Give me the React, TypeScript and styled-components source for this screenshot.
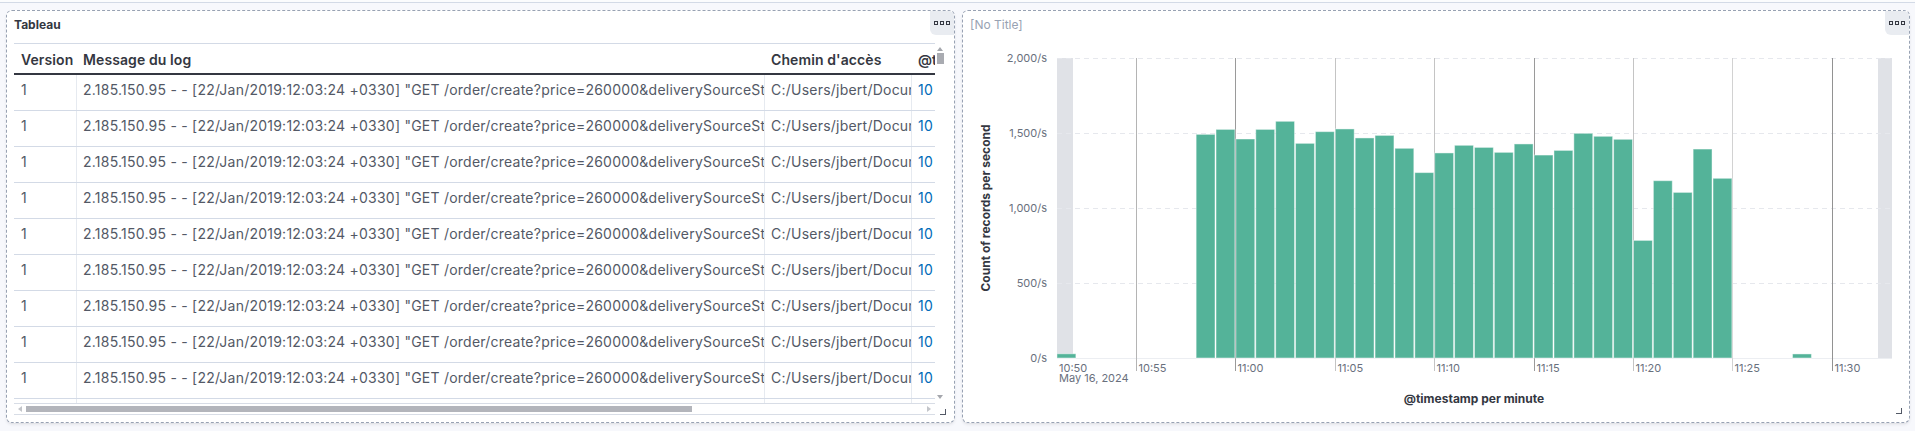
import React from "react";
import styled, { createGlobalStyle } from "styled-components";

const GlobalStyle = createGlobalStyle`
  html, body { margin: 0; padding: 0; }
  body {
    background: #f7f8fc;
    font-family: Inter, "Noto Sans", sans-serif;
    width: 1915px;
    height: 431px;
    overflow: hidden;
  }
  * { box-sizing: border-box; }
`;

const Page = styled.div`
  width: 1915px;
  height: 431px;
`;

const TopRule = styled.div`
  height: 3px;
  background: #fbfcfd;
  border-bottom: 1px solid #d3dae6;
`;

const PanelGrid = styled.div`
  display: grid;
  grid-template-columns: 949px 948px;
  column-gap: 7px;
  padding: 7px 0 0 6px;
`;

const Panel = styled.section`
  position: relative;
  height: 413px;
  background: #fff;
  border: 1px dashed #98a2b3;
  border-radius: 6px;
  box-shadow: 0 2px 3px rgba(60, 66, 80, 0.08), 0 1px 1px rgba(60, 66, 80, 0.05);
  display: flex;
  flex-direction: column;
`;

const PanelHeader = styled.header`
  height: 32px;
  flex: none;
  padding: 6px 7px 0;
`;

const PanelTitle = styled.h2<{ $muted?: boolean }>`
  margin: 0;
  font-size: 12px;
  line-height: 16px;
  font-weight: ${(p) => (p.$muted ? 400 : 700)};
  color: ${(p) => (p.$muted ? "#98a2b3" : "#343741")};
`;

const MenuButton = styled.button`
  position: absolute;
  top: 0;
  right: 0;
  width: 24px;
  height: 24px;
  padding: 0;
  border: none;
  background: #e9ecf1;
  border-radius: 0 5px 0 6px;
  display: flex;
  align-items: center;
  justify-content: center;
  gap: 2px;
`;

const MenuDot = styled.span`
  width: 4px;
  height: 4px;
  border: 1.2px solid #343741;
`;

const ResizeHandle = styled.span<{ $right: number; $bottom: number }>`
  position: absolute;
  right: ${(p) => p.$right}px;
  bottom: ${(p) => p.$bottom}px;
  width: 6px;
  height: 6px;
  border-right: 1.5px solid #535966;
  border-bottom: 1.5px solid #535966;
`;

/* ---------- Table ---------- */

const TableFrame = styled.div`
  margin: 0 9px 0 7px;
  height: 372px;
  display: grid;
  grid-template-columns: 921px 10px;
  grid-template-rows: 360px 12px;
`;

const Viewport = styled.div`
  overflow: hidden;
  border-top: 1px solid #d3dae6;
`;

const COLS = "62px 688px 147px 220px";

const HeadRow = styled.div`
  display: grid;
  grid-template-columns: ${COLS};
  width: max-content;
  height: 31px;
  border-bottom: 2px solid #343741;
`;

const HeadCell = styled.div`
  padding: 6px 10px 0 6px;
  border-left: 1px solid transparent;
  font-size: 14px;
  line-height: 20px;
  font-weight: 600;
  letter-spacing: 0.1px;
  color: #343741;
  white-space: nowrap;
  overflow: hidden;
`;

const BodyRow = styled.div`
  display: grid;
  grid-template-columns: ${COLS};
  width: max-content;
  height: 36px;
  border-bottom: 1px solid #d3dae6;
`;

const BodyCell = styled.div<{ $link?: boolean; $first?: boolean }>`
  padding: 5px 2px 0 6px;
  border-left: 1px solid ${(p) => (p.$first ? "transparent" : "#e6eaf0")};
  font-size: 14px;
  line-height: 20px;
  letter-spacing: 0.23px;
  color: ${(p) => (p.$link ? "#006bb8" : "#535966")};
  white-space: nowrap;
  overflow: hidden;
`;

const VScroll = styled.div`
  position: relative;
  display: flex;
  flex-direction: column;
  align-items: center;
`;

const Arrow = styled.span<{ $dir: "up" | "down" | "left" | "right" }>`
  width: 0;
  height: 0;
  border: 3px solid transparent;
  ${(p) =>
    p.$dir === "up"
      ? "border-bottom: 4px solid #a5a7ad; border-top: none;"
      : p.$dir === "down"
      ? "border-top: 4px solid #a5a7ad; border-bottom: none;"
      : p.$dir === "left"
      ? "border-right: 4px solid #c3c5ca; border-left: none;"
      : "border-left: 4px solid #c3c5ca; border-right: none;"}
`;

const VThumb = styled.div`
  width: 7px;
  height: 11px;
  margin-top: 2px;
  background: #a9abb1;
`;

const Spacer = styled.div<{ $size?: number }>`
  flex: ${(p) => (p.$size ? "none" : "1")};
  height: ${(p) => (p.$size ? `${p.$size}px` : "auto")};
`;

const HScroll = styled.div`
  display: flex;
  align-items: center;
  border-top: 1px solid #d8dde6;
  border-bottom: 1px solid #d8dde6;
  padding: 0 4px;
  gap: 2px;
`;

const HThumb = styled.div`
  width: 666px;
  height: 6px;
  background: #b3b5bb;
  margin-left: 2px;
`;

/* ---------- Chart ---------- */

const ChartSvg = styled.svg`
  display: block;
  flex: none;
`;

const MESSAGE =
  '2.185.150.95 - - [22/Jan/2019:12:03:24 +0330] "GET /order/create?price=260000&deliverySourceStatus=1&deliveryType=2 HTTP/1.1" 200 5667';
const PATH = "C:/Users/jbert/Documents/logs/access.log";
const TS = "10 May 2024 10:58:12.000";

const ROWS = Array.from({ length: 10 }, (_, i) => i);

const VALUES = [
  1491, 1524, 1460, 1524, 1578, 1431, 1509, 1527, 1467, 1484, 1398, 1236, 1367, 1418, 1404,
  1371, 1427, 1353, 1384, 1498, 1478, 1458, 784, 1182, 1104, 1393, 1198,
];

const CW = 946;
const CH = 379;
const PL = 94;
const PR = 929;
const PT = 15;
const PB = 315;
const mx = (m: number) => 73.6 + m * 19.88;
const yv = (v: number) => PB - v * 0.15;

const TICKS: { m: number; label: string; color: string }[] = [
  { m: 5, label: "10:55", color: "#b4b4b4" },
  { m: 10, label: "11:00", color: "#9a9a9a" },
  { m: 15, label: "11:05", color: "#c4c4c4" },
  { m: 20, label: "11:10", color: "#c4c4c4" },
  { m: 25, label: "11:15", color: "#9a9a9a" },
  { m: 30, label: "11:20", color: "#c4c4c4" },
  { m: 35, label: "11:25", color: "#d2d2d2" },
  { m: 40, label: "11:30", color: "#929292" },
];

const YTICKS = [0, 500, 1000, 1500, 2000];
const fmt = (v: number) => v.toLocaleString("en-US") + "/s";

function Bar({ m, v }: { m: number; v: number }) {
  const x0 = mx(m);
  const x1 = mx(m + 1);
  const y = yv(v);
  return (
    <rect
      x={x0 + 0.5}
      y={y}
      width={x1 - x0 - 1}
      height={PB - y}
      fill="#54b399"
      stroke="#ffffff"
      strokeOpacity={0.45}
      strokeWidth={1}
    />
  );
}

function Chart() {
  return (
    <ChartSvg width={CW} height={CH} viewBox={`0 0 ${CW} ${CH}`}>
      <rect x={PL} y={PT} width={16} height={PB - PT} fill="#e0e2e7" />
      <rect x={915} y={PT} width={PR - 915} height={PB - PT} fill="#e0e2e7" />
      {YTICKS.filter((v) => v > 0).map((v) => (
        <line
          key={v}
          x1={PL}
          x2={PR}
          y1={yv(v) + 0.5}
          y2={yv(v) + 0.5}
          stroke="#e6e8ed"
          strokeDasharray="5 4"
        />
      ))}
      <line x1={PL} x2={PR} y1={PB + 0.5} y2={PB + 0.5} stroke="#eceef2" />
      {TICKS.map((t) => {
        const x = Math.round(mx(t.m)) + 0.5;
        return <line key={t.m} x1={x} x2={x} y1={PT} y2={328} stroke={t.color} strokeWidth={1} />;
      })}
      <Bar m={1} v={28} />
      {VALUES.map((v, i) => (
        <Bar key={i} m={8 + i} v={v} />
      ))}
      <Bar m={38} v={27} />
      <g fontFamily="Inter, 'Noto Sans', sans-serif" fontSize={11} fill="#69707d">
        {YTICKS.map((v) => (
          <text key={v} x={84} y={yv(v) + 4} textAnchor="end">
            {fmt(v)}
          </text>
        ))}
        <text x={96} y={329}>10:50</text>
        <text x={96} y={339}>May 16, 2024</text>
        {TICKS.map((t) => (
          <text key={t.m} x={Math.round(mx(t.m)) + 2.5} y={329}>
            {t.label}
          </text>
        ))}
      </g>
      <g fontFamily="Inter, 'Noto Sans', sans-serif" fontSize={12} fontWeight={700} fill="#343741">
        <text x={23} y={165} textAnchor="middle" transform="rotate(-90 23 165)" dy={4}>
          Count of records per second
        </text>
        <text x={511} y={360} textAnchor="middle">
          @timestamp per minute
        </text>
      </g>
    </ChartSvg>
  );
}

function MenuIcon() {
  return (
    <MenuButton aria-label="Options">
      <MenuDot />
      <MenuDot />
      <MenuDot />
    </MenuButton>
  );
}

export default function App() {
  return (
    <Page>
      <GlobalStyle />
      <TopRule />
      <PanelGrid>
        <Panel>
          <PanelHeader>
            <PanelTitle>Tableau</PanelTitle>
          </PanelHeader>
          <MenuIcon />
          <TableFrame>
            <Viewport>
              <HeadRow>
                <HeadCell>Version</HeadCell>
                <HeadCell>Message du log</HeadCell>
                <HeadCell>Chemin d'accès</HeadCell>
                <HeadCell>@timestamp</HeadCell>
              </HeadRow>
              {ROWS.map((r) => (
                <BodyRow key={r}>
                  <BodyCell $first>1</BodyCell>
                  <BodyCell>{MESSAGE}</BodyCell>
                  <BodyCell>{PATH}</BodyCell>
                  <BodyCell $link>{TS}</BodyCell>
                </BodyRow>
              ))}
            </Viewport>
            <VScroll>
              <Spacer $size={4} />
              <Arrow $dir="up" />
              <VThumb />
              <Spacer />
              <Arrow $dir="down" />
              <Spacer $size={4} />
            </VScroll>
            <HScroll>
              <Arrow $dir="left" />
              <HThumb />
              <Spacer />
              <Arrow $dir="right" />
            </HScroll>
          </TableFrame>
          <ResizeHandle $right={8} $bottom={7} />
        </Panel>
        <Panel>
          <PanelHeader>
            <PanelTitle $muted>[No Title]</PanelTitle>
          </PanelHeader>
          <MenuIcon />
          <Chart />
          <ResizeHandle $right={7} $bottom={8} />
        </Panel>
      </PanelGrid>
    </Page>
  );
}
